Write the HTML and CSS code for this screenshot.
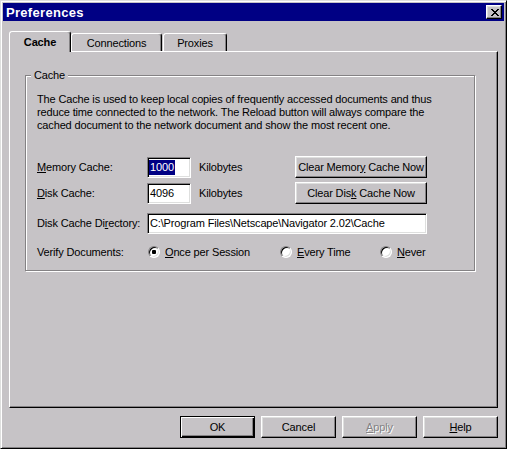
FILE: index.html
```html
<!DOCTYPE html>
<html>
<head>
<meta charset="utf-8">
<title>Preferences</title>
<link rel="stylesheet" href="styles.css">
</head>
<body>
<div class="window">
  <div class="titlebar">
    <span class="title">Preferences</span>
    <button class="close" aria-label="Close">
      <svg width="8" height="7" viewBox="0 0 8 7" shape-rendering="crispEdges">
        <path d="M0 0h2v1h-2zM6 0h2v1h-2zM1 1h2v1h-2zM5 1h2v1h-2zM2 2h4v1h-4zM3 3h2v1h-2zM2 4h4v1h-4zM1 5h2v1h-2zM5 5h2v1h-2zM0 6h2v1h-2zM6 6h2v1h-2z" fill="#000"/>
      </svg>
    </button>
  </div>

  <div class="tabs">
    <div class="tab active">Cache</div>
    <div class="tab tab-conn">Connections</div>
    <div class="tab tab-proxy">Proxies</div>
  </div>

  <div class="panel">
    <fieldset class="group">
      <legend>Cache</legend>
      <div class="group-body">
        <p class="desc">The Cache is used to keep local copies of frequently accessed documents and thus<br>reduce time connected to the network. The Reload button will always compare the<br>cached document to the network document and show the most recent one.</p>

        <div class="row row-first">
          <span class="label"><u>M</u>emory Cache:</span>
          <div class="edit edit-num"><span class="sel">1000</span></div>
          <span class="unit">Kilobytes</span>
          <button class="btn btn-clear">Clear Memor<u>y</u> Cache Now</button>
        </div>

        <div class="row row-second">
          <span class="label"><u>D</u>isk Cache:</span>
          <div class="edit edit-num">4096</div>
          <span class="unit">Kilobytes</span>
          <button class="btn btn-clear">Clear Dis<u>k</u> Cache Now</button>
        </div>

        <div class="row row-dir">
          <span class="label">Disk Cache Di<u>r</u>ectory:</span>
          <div class="edit edit-dir">C:\Program Files\Netscape\Navigator 2.02\Cache</div>
        </div>

        <div class="row row-radio">
          <span class="label label-radio">Verify Documents:</span>
          <label class="opt opt-1"><span class="radio checked"><span class="dot"></span></span><span><u>O</u>nce per Session</span></label>
          <label class="opt opt-2"><span class="radio"></span><span><u>E</u>very Time</span></label>
          <label class="opt"><span class="radio"></span><span><u>N</u>ever</span></label>
        </div>
      </div>
    </fieldset>
  </div>

  <div class="actions">
    <button class="btn btn-action default">OK</button>
    <button class="btn btn-action">Cancel</button>
    <button class="btn btn-action disabled"><u>A</u>pply</button>
    <button class="btn btn-action"><u>H</u>elp</button>
  </div>
</div>
</body>
</html>
```

FILE: styles.css
```css
* {
  box-sizing: border-box;
}

html, body {
  margin: 0;
  padding: 0;
  background: #c6c3c6;
}

body {
  font-family: "Liberation Sans", Arial, sans-serif;
  font-size: 11px;
  line-height: 13px;
  letter-spacing: -0.15px;
  color: #000;
}

.window {
  width: 507px;
  height: 449px;
  background: #c6c3c6;
  border: 1px solid;
  border-color: #dedfde #000 #000 #dedfde;
  box-shadow: inset 1px 1px 0 #fff, inset -1px -1px 0 #848284;
  padding: 2px;
  display: flex;
  flex-direction: column;
}

/* ---------- title bar ---------- */
.titlebar {
  height: 18px;
  flex: none;
  background: #000084;
  color: #fff;
  display: flex;
  align-items: center;
  justify-content: space-between;
  padding: 0 2px 0 3px;
}

.title {
  font-weight: bold;
  font-size: 13px;
  letter-spacing: 0.3px;
}

.close {
  width: 16px;
  height: 14px;
  padding: 0 0 0 1px;
  margin: 0;
  background: #c6c3c6;
  border: 1px solid;
  border-color: #fff #000 #000 #fff;
  box-shadow: inset -1px -1px 0 #848284, inset 1px 1px 0 #dedfde;
  display: flex;
  align-items: center;
  justify-content: center;
}

.close svg {
  display: block;
}

/* ---------- tabs ---------- */
.tabs {
  display: flex;
  align-items: flex-end;
  height: 20px;
  margin: 10px 6px 0 6px;
  flex: none;
}

.tab {
  height: 18px;
  border: 1px solid;
  border-bottom: none;
  border-color: #fff #000 transparent #fff;
  border-radius: 3px 3px 0 0;
  box-shadow: inset -1px 0 0 #848284;
  display: flex;
  align-items: center;
  justify-content: center;
  padding-top: 1px;
  background: #c6c3c6;
}

.tab.active {
  width: 62px;
  height: 21px;
  margin-bottom: -1px;
  position: relative;
  z-index: 1;
  font-weight: bold;
  padding-top: 0;
}

.tab-conn {
  width: 91px;
}

.tab-proxy {
  width: 64px;
  margin-left: 1px;
}

/* ---------- panel ---------- */
.panel {
  height: 357px;
  flex: none;
  margin: 0 6px;
  border: 1px solid;
  border-color: #fff #000 #000 #fff;
  box-shadow: inset -1px -1px 0 #848284;
}

.group {
  width: 450px;
  margin: 17px 0 0 15px;
  padding: 0;
  border: 1px solid #848284;
  box-shadow: 1px 1px 0 #fff, inset 1px 1px 0 #fff;
  min-width: 0;
}

.group legend {
  padding: 0 3px;
  margin-left: 5px;
  line-height: 13px;
  background: #c6c3c6;
}

.group-body {
  padding: 11px 11px 11px 11px;
}

.desc {
  margin: 0;
  line-height: 13px;
  white-space: nowrap;
}

/* ---------- rows ---------- */
.row {
  display: flex;
  align-items: center;
}

.row-first {
  height: 22px;
  margin-top: 24px;
}

.row-second {
  height: 22px;
  margin-top: 4px;
}

.row-dir {
  height: 21px;
  margin-top: 9px;
}

.row-radio {
  height: 14px;
  margin-top: 11px;
}

.label {
  width: 110px;
  flex: none;
}

.label-radio {
  width: 111px;
}

.edit {
  height: 21px;
  background: #fff;
  border: 1px solid;
  border-color: #848284 #fff #fff #848284;
  box-shadow: inset 1px 1px 0 #000, inset -1px -1px 0 #dedfde;
  padding: 0 2px;
  display: flex;
  align-items: center;
  flex: none;
  white-space: nowrap;
  overflow: hidden;
}

.row-first .edit,
.row-second .edit {
  align-self: flex-end;
}

.edit-num {
  width: 44px;
}

.edit-dir {
  width: 280px;
}

.sel {
  background: #000084;
  color: #fff;
  margin-left: -1px;
  padding: 1px 1px;
}

.unit {
  width: 104px;
  padding-left: 8px;
  flex: none;
}

/* ---------- buttons ---------- */
.btn {
  font-family: "Liberation Sans", Arial, sans-serif;
  font-size: 11px;
  line-height: 13px;
  letter-spacing: -0.15px;
  color: #000;
  height: 22px;
  margin: 0;
  padding: 0;
  background: #c6c3c6;
  border: 1px solid;
  border-color: #fff #000 #000 #fff;
  box-shadow: inset -1px -1px 0 #848284, inset 1px 1px 0 #dedfde;
  white-space: nowrap;
  flex: none;
}

.btn-clear {
  width: 132px;
}

.btn-action {
  width: 75px;
}

.btn.default {
  border-color: #000;
  box-shadow: inset 1px 1px 0 #fff, inset -1px -1px 0 #000, inset -2px -2px 0 #848284;
}

.btn.disabled {
  color: #848284;
  text-shadow: 1px 1px 0 #fff;
}

.actions {
  display: flex;
  justify-content: flex-end;
  gap: 6px;
  margin-top: 8px;
  padding-right: 6px;
  flex: none;
}

/* ---------- radios ---------- */
.opt {
  display: flex;
  align-items: center;
  gap: 5px;
  flex: none;
}

.opt-1 {
  width: 132px;
}

.opt-2 {
  width: 100px;
}

.radio {
  width: 12px;
  height: 12px;
  border-radius: 50%;
  border: 1px solid;
  border-color: #848284 #fff #fff #848284;
  box-shadow: inset 1px 1px 0 #000, inset -1px -1px 0 #dedfde;
  background: #fff;
  display: flex;
  align-items: center;
  justify-content: center;
  flex: none;
}

.dot {
  width: 4px;
  height: 4px;
  border-radius: 1px;
  background: #000;
}
```
